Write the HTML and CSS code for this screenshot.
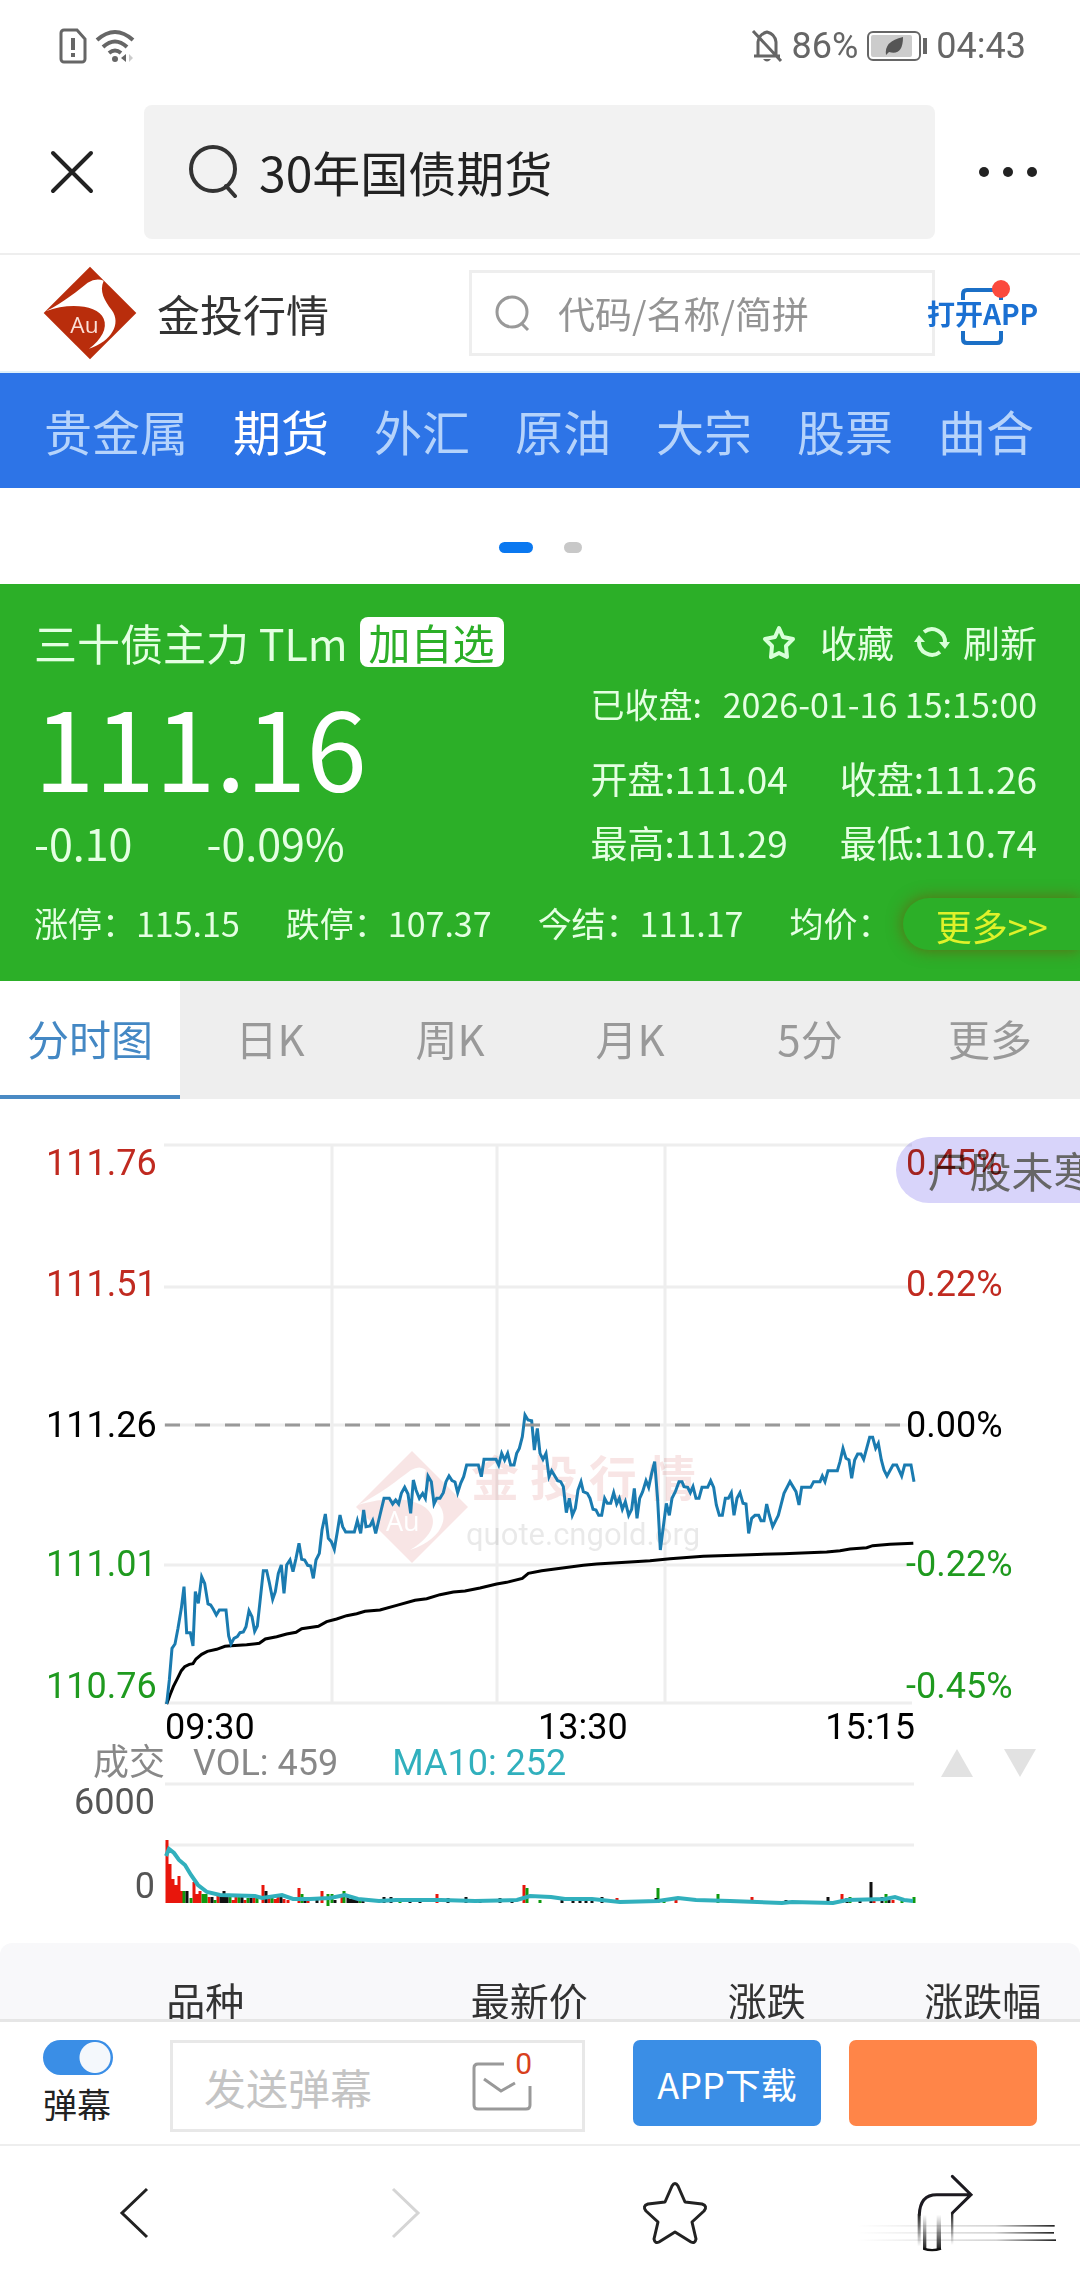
FILE: index.html
```html
<!DOCTYPE html>
<html lang="zh-CN">
    <head>
        <meta charset="UTF-8">
        <meta name="viewport" content="width=device-width, initial-scale=1">
        <title>30年国债期货 - 金投行情</title>
        <link rel="stylesheet" href="styles.css">
    </head>
    <body>
        <div class="status">
            <svg class="status-left" viewBox="0 0 78 36" width="78" height="36">
                <path d="M4 2h13l8 9v20a3 3 0 0 1-3 3H4a3 3 0 0 1-3-3V5a3 3 0 0 1 3-3z" transform="translate(1 0)" fill="none" stroke="#666" stroke-width="3"/>
                <path d="M14 10v12M14 25v4" stroke="#666" stroke-width="4"/>
                <path d="M38 12q18-16 36 0M44 19q12-11 24 0M50 25q6-5 12 0" fill="none" stroke="#666" stroke-width="4"/>
                <circle cx="56" cy="31" r="3" fill="#666"/>
                <path d="M67 26v8l-5-4z" fill="#666"/>
                <path d="M70 26v8l4-4z" fill="#ccc"/>
            </svg>
            <div class="status-right">
                <svg viewBox="0 0 32 36" width="32" height="36" fill="none" stroke="#666" stroke-width="3">
                    <path d="M7 28V14q1-8 9-10q8 2 9 10v14M3 28h26M2 3l28 30"/>
                    <path d="M12 31q4 5 8 0z" fill="#666" stroke="none"/>
                </svg>
                <span>86%</span>
                <svg class="battery" viewBox="0 0 60 32" width="60" height="32">
                    <rect x="1" y="2" width="52" height="28" rx="5" fill="#fff" stroke="#666" stroke-width="2"/>
                    <rect x="4" y="5" width="41" height="22" rx="2" fill="#ccc"/>
                    <path d="M19 25q-2-14 17-18q0 19-14 15z" fill="#555"/>
                    <path d="M58 8v16" stroke="#666" stroke-width="4"/>
                </svg>
                <span>04:43</span>
            </div>
        </div>

        <div class="browser-bar">
            <button class="icon-btn" aria-label="关闭">
                <svg viewBox="0 0 44 44" width="44" height="44"><path d="M3 3l38 38M41 3L3 41" stroke="#222" stroke-width="4" stroke-linecap="round"/></svg>
            </button>
            <button class="query">
                <svg viewBox="0 0 50 54" width="50" height="54" fill="none" stroke="#333" stroke-width="4"><circle cx="24" cy="25" r="22"/><path d="M37 42l9 10" stroke-linecap="round"/></svg>
                <span>30年国债期货</span>
            </button>
            <button class="icon-btn" aria-label="菜单">
                <svg viewBox="0 0 60 12" width="60" height="12" fill="#222"><circle cx="6" cy="6" r="5"/><circle cx="30" cy="6" r="5"/><circle cx="54" cy="6" r="5"/></svg>
            </button>
        </div>

        <header class="site">
            <a class="brand" href="#">
                <svg viewBox="0 0 282 282" width="94" height="94">
                    <path d="M141 2L280 141L141 280L2 141z" fill="#b92d0c"/>
                    <path d="M8 136C60 110 110 70 134 50Q160 34 182 44C168 76 184 102 206 132C236 172 206 226 138 248C176 220 194 186 182 158C166 118 80 108 8 136z" fill="#fff"/>
                    <text x="82" y="200" class="logo-au">Au</text>
                </svg>
                <span>金投行情</span>
            </a>
            <label class="site-search">
                <svg viewBox="0 0 38 38" width="38" height="38" fill="none" stroke="#999" stroke-width="3"><circle cx="18" cy="18" r="15"/><path d="M28 30l6 6"/></svg>
                <input type="text" aria-label="搜索" placeholder="代码/名称/简拼">
            </label>
            <a class="open-app" href="#">
                <svg viewBox="0 0 60 72" width="60" height="72">
                    <path d="M10 23V17q0-4 4-4h30q4 0 4 4v6M10 54v8q0 4 4 4h30q4 0 4-4v-8" fill="none" stroke="#1b6fc6" stroke-width="4"/>
                    <circle cx="48" cy="12" r="9" fill="#fb4a3e"/>
                </svg>
                <span>打开APP</span>
            </a>
        </header>

        <nav class="markets">
            <a href="#">贵金属</a>
            <a href="#" class="on">期货</a>
            <a href="#">外汇</a>
            <a href="#">原油</a>
            <a href="#">大宗</a>
            <a href="#">股票</a>
            <a href="#">曲合</a>
        </nav>

        <div class="dots"><i class="on"></i><i></i></div>

        <section class="quote">
            <div class="quote-top">
                <h1>三十债主力 TLm</h1>
                <button class="add">加自选</button>
                <div class="tools">
                    <button>
                        <svg viewBox="0 0 36 36" width="36" height="36" fill="none" stroke="#d8ffd8" stroke-width="4" stroke-linejoin="round"><path d="M18 4l4 9 10 2-7 7 1 11-8-4-8 4 1-11-7-7 10-2z"/></svg>
                        <span class="fav">收藏</span>
                    </button>
                    <button>
                        <svg viewBox="0 0 36 36" width="36" height="36" fill="none" stroke="#d8ffd8" stroke-width="4"><path d="M10 8a13 13 0 0 1 21 11M26 28A13 13 0 0 1 5 17"/><path d="M25 18h11l-5 7zM0 18h11l-6-7z" fill="#d8ffd8" stroke="none"/></svg>
                        <span>刷新</span>
                    </button>
                </div>
            </div>
            <div class="quote-main">
                <div>
                    <div class="price">111.16</div>
                    <div class="change"><span>-0.10</span><span>-0.09%</span></div>
                </div>
                <div class="ohlc">
                    <div class="closed"><span>已收盘:</span><span>2026-01-16 15:15:00</span></div>
                    <span>开盘:111.04</span><span>收盘:111.26</span>
                    <span>最高:111.29</span><span>最低:110.74</span>
                </div>
            </div>
            <div class="extra">
                <span>涨停：115.15</span><span>跌停：107.37</span><span>今结：111.17</span><span>均价：</span>
                <button class="more">更多&gt;&gt;</button>
            </div>
        </section>

        <nav class="tabs">
            <button class="on">分时图</button>
            <button>日K</button>
            <button>周K</button>
            <button>月K</button>
            <button>5分</button>
            <button>更多</button>
        </nav>

        <section class="chart">
            <svg class="canvas" viewBox="0 0 1080 645">
                <path class="grid" d="M164 46H912M164 188H912M164 326H912M164 466H912M164 604H912M332 46V604M497 46V604M665 46V604"/>

                <!-- watermark -->
                <g opacity=".1">
                    <path d="M412 352L468 408L412 464L356 408z" fill="#c01010"/>
                    <path d="M358 406C379 396 399 380 411 371Q420 366 426 371C421 388 431 395 440 407C450 422 438 442 410 451C429 440 437 426 431 415C423 401 395 395 358 406z" fill="#fff"/>
                    <text x="386" y="432" class="mark-au">Au</text>
                    <text x="471" y="397" class="mark-name">金 投 行 情</text>
                    <text x="466" y="446" class="mark-url">quote.cngold.org</text>
                </g>

                <svg x="150" y="291" width="780" height="330" viewBox="0 0 2340 990">
                    <polyline class="avg" points="50,942 60,915 70,890 84,862 94,842 104,830 118,823 129,821 138,807 155,793 172,784 200,778 225,769 243,767 290,764 328,760 346,747 380,740 410,732 438,727 455,716 505,709 530,695 560,687 590,677 620,671 645,664 690,660 740,646 795,631 830,626 870,614 910,606 945,603 990,594 1040,582 1070,577 1117,565 1135,550 1175,542 1300,526 1340,522 1440,516 1500,512 1560,506 1660,499 1800,494 1900,491 2030,486 2070,482 2100,477 2150,473 2168,467 2220,463 2290,460"/>
                    <polyline class="now" points="50,942 58,870 66,775 75,762 84,715 94,655 102,590 110,728 121,728 129,768 136,605 145,640 155,560 164,580 174,642 182,645 190,658 199,675 208,660 228,660 236,738 243,762 252,745 262,740 270,728 280,726 288,710 297,662 306,680 314,724 322,708 330,635 340,542 350,542 358,578 368,628 376,605 385,550 394,525 402,610 410,525 420,510 429,545 438,505 447,460 455,508 464,510 473,526 482,528 490,565 498,510 508,490 516,420 526,372 535,445 544,455 553,478 562,425 570,375 578,410 587,426 613,426 622,392 632,430 641,360 648,410 660,408 668,392 677,430 690,375 702,325 718,325 728,342 737,330 746,342 754,310 764,292 774,312 782,370 790,270 798,300 808,325 818,310 826,325 834,258 844,275 852,342 860,325 870,325 880,308 888,275 897,258 906,272 915,276 923,308 932,280 941,260 950,225 985,225 994,260 1002,208 1038,208 1046,225 1055,190 1064,210 1073,190 1082,225 1092,225 1100,190 1108,175 1117,140 1125,75 1134,90 1145,92 1153,180 1162,115 1170,190 1179,208 1188,190 1197,260 1205,242 1223,272 1232,275 1240,290 1249,368 1258,325 1267,376 1276,355 1284,300 1293,275 1300,305 1312,310 1320,325 1329,358 1338,360 1346,376 1355,376 1364,325 1372,340 1382,340 1391,308 1400,342 1408,325 1417,358 1426,335 1436,376 1445,358 1453,295 1461,385 1469,325 1478,305 1488,272 1496,292 1505,250 1514,215 1523,330 1531,480 1540,410 1549,340 1558,376 1566,325 1576,305 1587,275 1596,275 1602,290 1613,292 1621,308 1629,290 1638,325 1647,325 1656,292 1673,292 1682,272 1691,292 1699,345 1708,376 1717,376 1726,325 1735,325 1744,308 1752,376 1761,325 1770,308 1779,340 1788,342 1796,430 1805,385 1815,376 1826,376 1833,392 1842,392 1850,342 1858,375 1868,410 1885,376 1902,310 1920,275 1938,305 1947,345 1955,292 1982,292 1991,275 2010,275 2017,258 2025,275 2034,242 2062,242 2070,215 2079,175 2088,205 2097,210 2105,265 2114,210 2123,192 2133,192 2141,208 2150,175 2159,142 2168,142 2177,175 2185,160 2194,210 2202,240 2211,258 2229,225 2240,225 2255,258 2264,225 2283,225 2292,275"/>
                </svg>
                <path class="zero" d="M165 326H904"/>

                <g class="up"><text x="46" y="76">111.76</text><text x="46" y="197">111.51</text><text x="906" y="76">0.45%</text><text x="906" y="197">0.22%</text></g>
                <g class="flat"><text x="46" y="338">111.26</text><text x="906" y="338">0.00%</text><text x="165" y="640">09:30</text><text x="538" y="640">13:30</text><text x="915" y="640" text-anchor="end">15:15</text></g>
                <g class="down"><text x="46" y="477">111.01</text><text x="46" y="599">110.76</text><text x="906" y="477">-0.22%</text><text x="906" y="599">-0.45%</text></g>
            </svg>

            <div class="vol-head">
                <span class="vol-name">成交</span>
                <span class="vol-now">VOL: 459</span>
                <span class="vol-ma">MA10: 252</span>
                <button aria-label="上一个指标"><svg viewBox="0 0 32 28" width="32" height="28"><path d="M16 0l16 28H0z" fill="#e2e2e2"/></svg></button>
                <button aria-label="下一个指标"><svg viewBox="0 0 32 28" width="32" height="28"><path d="M0 0h32L16 28z" fill="#e2e2e2"/></svg></button>
            </div>

            <svg class="canvas" viewBox="0 0 1080 161">
                <path class="grid" d="M165 2H914M165 63H914"/>
                <g stroke-width="3">
                    <path stroke="#e8160c" d="M167 121V58M170 121V82M173 121V97M176 121V103M179 121V94M182 121V109M194 121V100M197 121V112M200 121V109M209 121V115M218 121V113M233 121V118M236 121V112M245 121V118M254 121V116M263 121V103M269 121V113M275 121V117M278 121V113M284 121V117M288 121V118M299 121V106M308 121V118M322 121V109M342 121V115M437 121V112M524 121V103M617 121V116M676 121V115M752 121V115M842 121V112M874 121V116M893 121V118"/>
                    <path stroke="#0e9a0e" d="M184 121V109M191 121V116M203 121V112M206 121V112M215 121V118M230 121V112M239 121V115M248 121V116M257 121V113M272 121V116M302 121V112M328 124V112M332 121V112M344 121V109M360 121V116M400 121V118M527 121V106M540 121V118M658 121V106M664 121V118M718 121V112M734 121V118M850 121V115M886 121V112M902 121V118M914 121V115"/>
                    <path stroke="#111" d="M187 121V109M212 121V115M221 121V113M224 121V109M227 121V113M242 121V115M251 121V116M266 121V109M281 121V115M305 121V116M317 121V115M335 121V118M348 121V115M351 121V117M354 121V115M357 121V117M363 121V118M384 121V115M391 121V115M410 121V116M420 121V118M448 121V116M466 121V115M480 121V118M500 121V116M512 121V118M562 121V115M573 121V118M580 121V115M586 121V117M592 121V118M602 121V115M656 121V116M786 121V118M828 121V115M847 121V116M860 121V117M871 121V100M882 121V115M889 121V118"/>
                </g>
                <polyline class="ma" points="166,74 169,67 174,71 179,78 185,83 191,93 198,103 207,110 220,113 255,114 262,116 282,113 293,117 310,117 330,116 345,113 358,117 379,119 396,118 441,118 475,119 517,118 530,114 551,115 565,117 592,117 620,120 658,119 678,116 696,118 730,119 782,121 792,120 833,121 847,118 885,117 895,115 904,118 913,119"/>
                <g class="scale"><text x="155" y="32" text-anchor="end">6000</text><text x="155" y="116" text-anchor="end">0</text></g>
            </svg>

            <div class="danmu">尸股未寒</div>
        </section>

        <table class="list">
            <thead>
                <tr><th class="c1">品种</th><th class="c2">最新价</th><th class="c3">涨跌</th><th class="c4">涨跌幅</th></tr>
            </thead>
        </table>

        <footer class="dock">
            <div class="send">
                <label class="switch">
                    <input type="checkbox" checked>
                    <span>弹幕</span>
                </label>
                <div class="send-box">
                    <input type="text" aria-label="弹幕内容" placeholder="发送弹幕">
                    <button aria-label="消息">
                        <svg viewBox="0 0 60 50" width="60" height="50" fill="none" stroke="#999" stroke-width="3"><path d="M32 3H6Q2 3 2 7V44Q2 48 6 48H54Q58 48 58 44V25M12 18L29 30L43 22"/></svg>
                        <span class="count">0</span>
                    </button>
                </div>
                <button class="btn blue">APP下载</button>
                <button class="btn orange" aria-label="更多服务"></button>
            </div>
            <nav class="browser-nav">
                <button aria-label="后退"><svg viewBox="0 0 32 54" width="32" height="54"><path d="M28 3L3 27L28 51" fill="none" stroke="#222" stroke-width="3"/></svg></button>
                <button aria-label="前进"><svg viewBox="0 0 32 54" width="32" height="54"><path d="M4 3L29 27L4 51" fill="none" stroke="#d5d5d5" stroke-width="3"/></svg></button>
                <button aria-label="收藏"><svg viewBox="0 0 66 64" width="66" height="64"><path d="M30 5Q33 0 36 5L43 21L60 23Q66 25 62 30L50 41L54 58Q53 63 49 61L33 51L17 61Q13 63 12 58L16 41L4 30Q0 25 6 23L23 21z" fill="none" stroke="#222" stroke-width="3" stroke-linejoin="round"/></svg></button>
                <button aria-label="分享">
                    <svg viewBox="-45 0 720 360" width="240" height="120">
                        <defs>
                            <linearGradient id="fadeDown" x1="0" y1="0" x2="0" y2="1"><stop offset="0" stop-color="#222"/><stop offset="1" stop-color="#222" stop-opacity="0"/></linearGradient>
                            <linearGradient id="fadeUp" x1="0" y1="1" x2="0" y2="0"><stop offset="0" stop-color="#222"/><stop offset="1" stop-color="#222" stop-opacity="0"/></linearGradient>
                            <linearGradient id="fadeLeft" x1="1" y1="0" x2="0" y2="0"><stop offset="0" stop-color="#222"/><stop offset=".3" stop-color="#222" stop-opacity=".2"/><stop offset="1" stop-color="#222" stop-opacity="0"/></linearGradient>
                        </defs>
                        <path d="M238 185Q240 125 290 125H393M337 70L393 125L337 180" fill="none" stroke="#1c1a20" stroke-width="9" stroke-linecap="round"/>
                        <rect x="233" y="184" width="9" height="96" fill="url(#fadeDown)"/>
                        <rect x="333" y="180" width="7" height="96" fill="url(#fadeDown)"/>
                        <rect x="249" y="185" width="10" height="103" fill="url(#fadeUp)"/>
                        <rect x="290" y="185" width="13" height="103" fill="url(#fadeUp)"/>
                        <path d="M250 287Q276 296 303 287" fill="none" stroke="#111" stroke-width="7"/>
                        <g fill="url(#fadeLeft)"><rect x="50" y="216" width="594" height="5"/><rect x="50" y="237" width="592" height="5"/><rect x="50" y="259" width="598" height="5"/></g>
                    </svg>
                </button>
            </nav>
        </footer>
    </body>
</html>
```
FILE: styles.css
```css
* {
    box-sizing: border-box;
}

body {
    margin: 0;
    background: #fff;
    color: #333;
    font-family: "Noto Sans CJK SC", sans-serif;
    overflow-x: hidden;
}

button, input {
    font: inherit;
    color: inherit;
    border: 0;
    padding: 0;
    margin: 0;
    background: none;
}

a {
    color: inherit;
    text-decoration: none;
}

svg {
    display: block;
    flex: none;
}

/* phone status bar */
.status {
    display: flex;
    justify-content: space-between;
    align-items: center;
    height: 92px;
    padding: 0 54px 0 59px;
    color: #666;
    font: 36px Roboto, sans-serif;
}

.status-right {
    display: flex;
    align-items: center;
    gap: 9px;
}

/* browser address row */
.browser-bar {
    display: grid;
    grid-template-columns: 144px 1fr 145px;
    align-items: center;
    height: 163px;
    padding-bottom: 2px;
    border-bottom: 2px solid #eee;
}

.icon-btn {
    justify-self: center;
}

.query {
    display: flex;
    align-items: center;
    gap: 20px;
    height: 134px;
    padding: 0 0 2px 45px;
    border-radius: 8px;
    background: #f2f2f2;
    color: #222;
    font-size: 48px;
}

/* site header */
.site {
    display: flex;
    align-items: center;
    height: 118px;
    padding-left: 43px;
    border-bottom: 2px solid #dff0fa;
}

.brand {
    display: flex;
    align-items: center;
    gap: 20px;
    font-size: 43px;
    line-height: 90px;
}

.logo-au {
    font: 68px "Open Sans", sans-serif;
    fill: #fbe0d8;
}

.site-search {
    display: flex;
    flex: 1;
    align-items: center;
    gap: 26px;
    height: 86px;
    margin-left: 140px;
    padding-left: 22px;
    border: 3px solid #eee;
    font-size: 37px;
}

.site-search input {
    width: 100%;
    min-width: 0;
}

.site-search input::placeholder {
    color: #949494;
}

.open-app {
    display: grid;
    justify-items: center;
    align-items: center;
    width: 110px;
    margin: 0 43px 0 -8px;
    color: #1b70d2;
    font-size: 28px;
    font-weight: bold;
    white-space: nowrap;
}

.open-app svg, .open-app span {
    grid-area: 1 / 1;
}

/* market categories */
.markets {
    display: flex;
    gap: 45px;
    height: 115px;
    padding: 0 44px;
    background: #2d74e7;
    color: #b5d3fb;
    font-size: 48px;
    line-height: 115px;
    white-space: nowrap;
    overflow: hidden;
}

.markets .on {
    color: #fff;
}

.dots {
    display: flex;
    justify-content: center;
    align-items: center;
    gap: 31px;
    height: 96px;
    padding-top: 22px;
}

.dots i {
    width: 18px;
    height: 11px;
    border-radius: 6px;
    background: #c8c8c8;
}

.dots .on {
    width: 34px;
    background: #0a78f0;
}

/* quote panel */
.quote {
    height: 397px;
    padding: 28px 0 0 34px;
    background: #2caf28;
    color: #e4ffe2;
    overflow: hidden;
}

.quote-top {
    display: flex;
    align-items: center;
    height: 60px;
    padding-right: 43px;
}

.quote h1 {
    margin: 0;
    font-size: 43px;
    font-weight: normal;
}

.add {
    height: 50px;
    margin-left: 12px;
    padding: 0 9px;
    border-radius: 8px;
    background: #fff;
    color: #2caf28;
    font-size: 42px;
    line-height: 50px;
}

.tools {
    display: flex;
    gap: 20px;
    margin-left: auto;
    font-size: 37px;
}

.tools button {
    display: flex;
    align-items: center;
    gap: 13px;
}

.tools .fav {
    margin-left: 10px;
}

.quote-main {
    display: flex;
    justify-content: space-between;
    height: 204px;
    padding-right: 43px;
}

.price {
    height: 142px;
    color: #fff;
    font-size: 109px;
    line-height: 146px;
}

.change {
    display: flex;
    gap: 74px;
    font-size: 43px;
    line-height: 56px;
}

.ohlc {
    display: grid;
    grid-template-columns: auto auto;
    grid-template-rows: 74px 64px 64px;
    column-gap: 52px;
    font-size: 37px;
    line-height: 64px;
}

.closed {
    display: flex;
    grid-column: 1 / 3;
    justify-content: space-between;
    font-size: 34px;
}

.extra {
    display: flex;
    align-items: center;
    gap: 46px;
    height: 92px;
    font-size: 34px;
    white-space: nowrap;
}

.more {
    flex: 1;
    height: 52px;
    margin: 4px 0 0 -34px;
    border-radius: 26px 0 0 26px;
    box-shadow: 0 0 16px rgba(150, 40, 0, .5);
    background: #2caf28;
    color: #dff22a;
    font-size: 36px;
    line-height: 54px;
}

/* period tabs */
.tabs {
    display: grid;
    grid-template-columns: repeat(6, 1fr);
    height: 118px;
    background: #eee;
    color: #999;
    font-size: 42px;
}

.tabs button {
    padding-bottom: 5px;
}

.tabs .on {
    padding-bottom: 2px;
    border-bottom: 4px solid #4a8ac4;
    background: #fff;
    color: #4488c4;
}

/* charts */
.chart {
    position: relative;
    overflow: hidden;
}

.canvas {
    width: 100%;
    overflow: visible;
    font: 36px Roboto, sans-serif;
}

.grid {
    fill: none;
    stroke: #eee;
    stroke-width: 3;
}

.zero {
    stroke: #999;
    stroke-width: 3;
    stroke-dasharray: 15 15;
}

.now {
    fill: none;
    stroke: #1a7bb0;
    stroke-width: 9;
}

.avg {
    fill: none;
    stroke: #000;
    stroke-width: 9;
}

.ma {
    fill: none;
    stroke: #31b0bd;
    stroke-width: 4;
}

.up {
    fill: #c02a20;
}

.down {
    fill: #1f9a1f;
}

.flat {
    fill: #000;
}

.scale {
    fill: #555;
}

.mark-au {
    font: 27px "Open Sans", sans-serif;
    fill: #fff;
}

.mark-name {
    font: bold 48px "Noto Sans CJK SC", sans-serif;
    fill: #c01010;
}

.mark-url {
    font-size: 31px;
    fill: #333;
}

.vol-head {
    display: flex;
    align-items: center;
    height: 38px;
    padding: 0 44px 0 93px;
    color: #888;
    font: 36px Roboto, "Noto Sans CJK SC", sans-serif;
    line-height: 38px;
}

.vol-now {
    margin-left: 28px;
}

.vol-ma {
    margin: 0 auto 0 54px;
    color: #31b0bd;
}

.vol-head button + button {
    margin-left: 31px;
}

.danmu {
    position: absolute;
    top: 38px;
    left: 83%;
    width: 240px;
    height: 66px;
    padding-left: 31px;
    border-radius: 33px;
    background: #d8d4fa;
    color: #666;
    font-size: 42px;
    line-height: 66px;
    white-space: nowrap;
    mix-blend-mode: multiply;
}

/* quote list */
.list {
    width: 100%;
    border-collapse: collapse;
    border-radius: 12px 12px 0 0;
    background: #f8f8fa;
    table-layout: fixed;
}

.list th {
    height: 116px;
    padding: 0 0 4px;
    font-size: 39px;
    font-weight: normal;
}

.list .c1 {
    width: 38%;
}

.list .c2 {
    width: 22%;
}

.list .c3 {
    width: 22%;
}

.list .c4 {
    width: 18%;
}

/* bottom dock */
.dock {
    position: fixed;
    right: 0;
    bottom: 0;
    left: 0;
    background: #fff;
}

.send {
    display: flex;
    height: 127px;
    padding: 18px 43px 0 43px;
    border-top: 3px solid #e6e6e6;
    border-bottom: 2px solid #eee;
}

.switch {
    flex: none;
    width: 127px;
    color: #222;
    font-size: 34px;
    line-height: 58px;
}

.switch input {
    display: block;
    appearance: none;
    width: 70px;
    height: 35px;
    border-radius: 18px;
    background: radial-gradient(circle at 52px 50%, #f4f8fc 15px, #3a8ee6 16px);
}

.send-box {
    display: flex;
    flex: 1;
    align-items: center;
    justify-content: space-between;
    min-width: 0;
    height: 92px;
    padding: 0 50px 0 31px;
    border: 3px solid #e8e8e8;
    font-size: 42px;
}

.send-box input {
    flex: 1;
    min-width: 0;
}

.send-box input::placeholder {
    color: #c4c4c4;
}

.send-box button {
    position: relative;
}

.count {
    position: absolute;
    top: -15px;
    right: 0;
    color: #d8401c;
    font: 30px Roboto, sans-serif;
}

.btn {
    flex: none;
    width: 188px;
    height: 86px;
    margin-left: 48px;
    border-radius: 7px;
    color: #fff;
    font-size: 36px;
}

.blue {
    background: #3a8ee6;
}

.orange {
    margin-left: 28px;
    background: #ff8548;
}

.browser-nav {
    display: grid;
    grid-template-columns: repeat(4, 1fr);
    align-items: center;
    height: 134px;
}

.browser-nav button {
    display: flex;
    justify-content: center;
}
```
